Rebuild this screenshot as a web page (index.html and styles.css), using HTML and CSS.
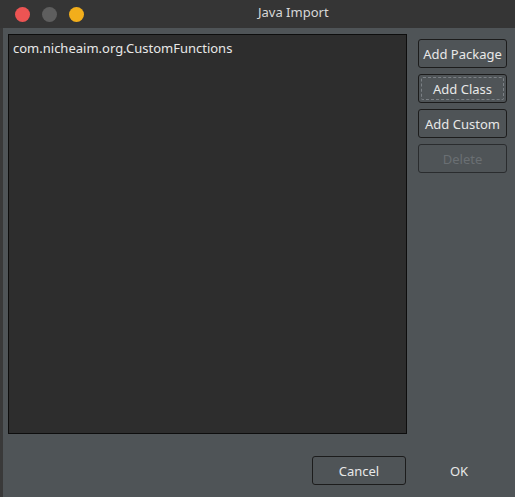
FILE: index.html
```html
<!DOCTYPE html>
<html>
<head>
<meta charset="utf-8">
<link rel="stylesheet" href="styles.css">
</head>
<body>
<div class="window">
  <div class="titlebar">
    <div class="lights">
      <span class="light red"></span>
      <span class="light gray"></span>
      <span class="light yellow"></span>
    </div>
    <div class="title">Java Import</div>
  </div>
  <div class="content">
    <div class="main">
      <div class="list">
        <div class="item">com.nicheaim.org.CustomFunctions</div>
      </div>
      <div class="side">
        <button class="btn">Add Package</button>
        <button class="btn focus">Add Class</button>
        <button class="btn">Add Custom</button>
        <button class="btn disabled">Delete</button>
      </div>
    </div>
    <div class="footer">
      <button class="btn cancel">Cancel</button>
      <button class="btn ok">OK</button>
    </div>
  </div>
</div>
</body>
</html>
```
FILE: styles.css
```css
* { box-sizing: border-box; }
html, body { margin: 0; padding: 0; }
body {
  width: 515px;
  height: 497px;
  background: #4f5457;
  font-family: "Noto Sans", "Open Sans", sans-serif;
  font-size: 13px;
  color: #e6e6e6;
  overflow: hidden;
}
.window {
  display: flex;
  flex-direction: column;
  height: 497px;
}
.titlebar {
  height: 28px;
  background: #353535;
  position: relative;
  display: flex;
  align-items: center;
}
.lights {
  display: flex;
  gap: 12px;
  padding-left: 15px;
  padding-top: 1px;
}
.light {
  width: 15px;
  height: 15px;
  border-radius: 50%;
  display: block;
}
.red { background: #ec5453; }
.gray { background: #5e5e5e; }
.yellow { background: #f2ae1b; }
.title {
  position: absolute;
  left: 258px;
  top: 3px;
  color: #d8d8d8;
  font-size: 13px;
}
.content {
  flex: 1;
  display: flex;
  flex-direction: column;
  border-left: 3px solid #393939;
  padding: 6px 8px 12px 5px;
}
.main {
  flex: 1;
  display: flex;
  gap: 11px;
}
.list {
  width: 400px;
  height: 400px;
  background: #2d2d2d;
  border: 1px solid #0d0d0d;
  padding: 3px 4px;
}
.item {
  color: #e8e8e8;
  line-height: 20px;
}
.side {
  display: flex;
  flex-direction: column;
  gap: 6px;
  padding-top: 5px;
}
.btn {
  width: 89px;
  height: 29px;
  background: #4f5457;
  border: 1px solid #1c1c1c;
  border-radius: 3px;
  color: #e8e8e8;
  font-family: "Noto Sans", "Open Sans", sans-serif;
  font-size: 13px;
  padding: 0;
  position: relative;
}
.btn.focus::after {
  content: "";
  position: absolute;
  inset: 2px;
  border: 1px dashed #7b8085;
  border-radius: 2px;
}
.btn.disabled {
  color: #6a6f73;
  border-color: #2a2c2e;
}
.footer {
  display: flex;
  gap: 8px;
  padding-left: 304px;
  height: 29px;
}
.cancel {
  width: 94px;
}
.ok {
  border: none;
  background: transparent;
  width: 90px;
}
```
